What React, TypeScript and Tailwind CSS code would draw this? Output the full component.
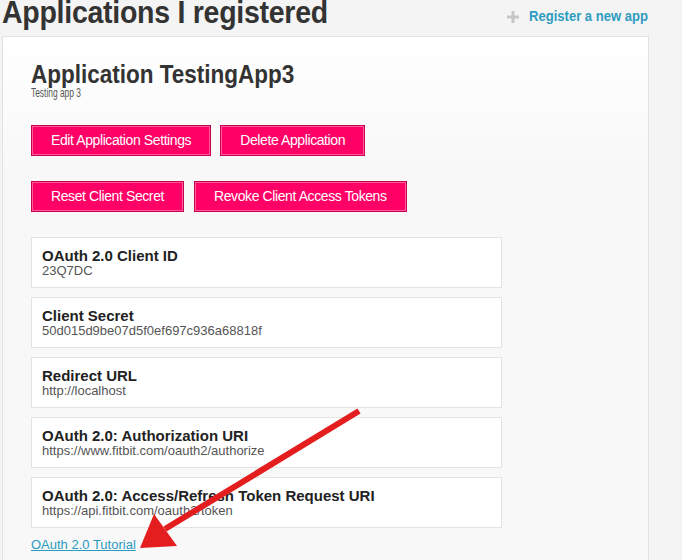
const fields = [
  { label: "OAuth 2.0 Client ID", value: "23Q7DC" },
  { label: "Client Secret", value: "50d015d9be07d5f0ef697c936a68818f" },
  { label: "Redirect URL", value: "http://localhost" },
  { label: "OAuth 2.0: Authorization URI", value: "https://www.fitbit.com/oauth2/authorize" },
  { label: "OAuth 2.0: Access/Refresh Token Request URI", value: "https://api.fitbit.com/oauth2/token" },
];

function PinkButton({ children }: { children: string }) {
  return (
    <button className="h-[31px] px-[19px] bg-[#ff0066] border border-[#c9004f] shadow-[inset_0_0_0_1px_#ff5c9a] text-white text-[14px] font-['Liberation_Sans',sans-serif] tracking-[-0.4px]">
      {children}
    </button>
  );
}

export default function App() {
  return (
    <div className="relative w-[682px] h-[560px] overflow-hidden bg-[#f4f4f4] font-['Liberation_Sans',Arial,sans-serif]">
      {/* header */}
      <div className="flex items-start justify-between h-[36px] pl-[2px] pr-[34px]">
        <h1 className="mt-[-10px] text-[31px] font-bold text-[#333] tracking-[-0.3px] origin-left scale-x-[0.92] whitespace-nowrap">
          Applications I registered
        </h1>
        <a className="flex items-center gap-[10px] mt-[5px] text-[15px] font-bold text-[#2e9cc0]">
          <svg width="12" height="12" viewBox="0 0 12 12" className="mt-[1px]">
            <rect x="4.5" y="0" width="3" height="12" fill="#c6c6c6" />
            <rect x="0" y="4.5" width="12" height="3" fill="#c6c6c6" />
          </svg>
          <span className="inline-block w-[119px] whitespace-nowrap origin-left scale-x-[0.87]">Register a new app</span>
        </a>
      </div>

      {/* card */}
      <div className="ml-[2px] w-[647px] h-[540px] border border-[#e2e2e2] bg-gradient-to-b from-white to-[#f8f8f8] to-[25%] pl-[28px] pt-[23px]">
        <h2 className="text-[25px] leading-[28px] font-bold text-[#333] origin-left scale-x-[0.9] whitespace-nowrap">
          Application TestingApp3
        </h2>
        <div className="text-[12px] leading-[10px] text-[#555] origin-left scale-x-[0.7] whitespace-nowrap">
          Testing app 3
        </div>

        <div className="flex gap-[9px] mt-[27px]">
          <PinkButton>Edit Application Settings</PinkButton>
          <PinkButton>Delete Application</PinkButton>
        </div>
        <div className="flex gap-[10px] mt-[25px]">
          <PinkButton>Reset Client Secret</PinkButton>
          <PinkButton>Revoke Client Access Tokens</PinkButton>
        </div>

        <div className="flex flex-col gap-[9px] mt-[25px] w-[471px]">
          {fields.map((f) => (
            <div key={f.label} className="h-[51px] bg-white border border-[#e3e3e3] px-[10px] pt-[9px]">
              <div className="text-[15px] leading-[17px] font-bold text-[#222]">{f.label}</div>
              <div className="text-[13px] leading-[14px] text-[#555]">{f.value}</div>
            </div>
          ))}
        </div>

        <a className="block mt-[7px] text-[13px] text-[#2a9bbf] underline">OAuth 2.0 Tutorial</a>
      </div>

      {/* annotation arrow */}
      <svg className="absolute left-0 top-0 pointer-events-none" width="682" height="560">
        <line x1="359" y1="411" x2="165" y2="529" stroke="#e41e1e" strokeWidth="6" strokeLinecap="butt" />
        <polygon points="140,548 154,514 177,546" fill="#e41e1e" />
      </svg>
    </div>
  );
}
